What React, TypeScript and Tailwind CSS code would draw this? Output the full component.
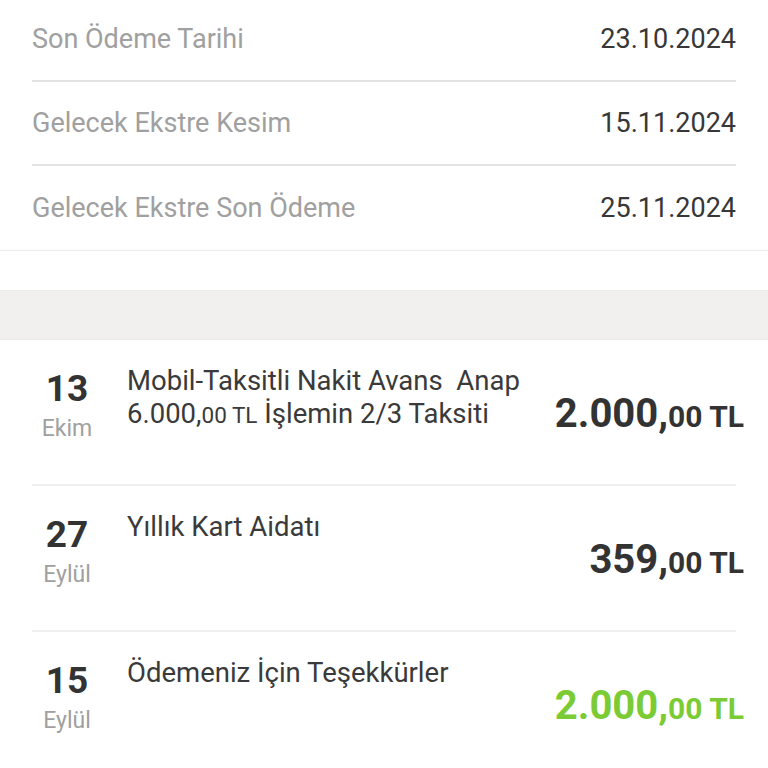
const infoRows = [
  { label: 'Son Ödeme Tarihi', value: '23.10.2024' },
  { label: 'Gelecek Ekstre Kesim', value: '15.11.2024' },
  { label: 'Gelecek Ekstre Son Ödeme', value: '25.11.2024' },
];

interface Transaction {
  day: string;
  month: string;
  title: string;
  detail?: boolean;
  whole: string;
  cents: string;
  positive?: boolean;
}

const transactions: Transaction[] = [
  {
    day: '13',
    month: 'Ekim',
    title: 'Mobil-Taksitli Nakit Avans\u00a0 Anap',
    detail: true,
    whole: '2.000,',
    cents: '00 TL',
  },
  { day: '27', month: 'Eylül', title: 'Yıllık Kart Aidatı', whole: '359,', cents: '00 TL' },
  {
    day: '15',
    month: 'Eylül',
    title: 'Ödemeniz İçin Teşekkürler',
    whole: '2.000,',
    cents: '00 TL',
    positive: true,
  },
];

export default function App() {
  return (
    <div className="w-[768px] h-[768px] overflow-hidden bg-white" style={{ fontFamily: 'Roboto, "Noto Sans", sans-serif' }}>
      <div className="-mt-[2px] border-b border-[#ececec]">
        {infoRows.map((row, i) => (
          <div key={row.label} className="px-8">
            <div
              className={
                'h-[84px] flex items-center justify-between text-[27px] ' +
                (i < infoRows.length - 1 ? 'border-b-2 border-[#e3e3e3]' : '')
              }
            >
              <span className="text-[#a0a0a0]">{row.label}</span>
              <span className="text-[#373737]">{row.value}</span>
            </div>
          </div>
        ))}
      </div>

      <div className="h-[39px]" />
      <div className="h-[50px] bg-[#f1f0ee] border-y border-[#ebebea]" />

      <div>
        {transactions.map((t, i) => (
          <div key={i}>
            {i > 0 && <div className="mx-8 h-[2px] bg-[#f0f0f0]" />}
            <div className="h-[144px] pl-8 pr-6 flex items-center">
              <div className="self-start pt-[26px] w-[70px] flex flex-col items-center">
                <span className="text-[37px] font-bold leading-[46px] text-[#333]">{t.day}</span>
                <span className="text-[23px] leading-[34px] text-[#a0a0a0]">{t.month}</span>
              </div>
              <div className="self-start pt-[24px] ml-[25px] flex-1 text-[27.5px] leading-[33px] text-[#3a3a3a]">
                <div>{t.title}</div>
                {t.detail && (
                  <div>
                    6.000,<span className="text-[22.5px]">00 TL</span> İşlemin 2/3 Taksiti
                  </div>
                )}
              </div>
              <div className={'font-bold whitespace-nowrap pt-[4px] ' + (t.positive ? 'text-[#7bcb35]' : 'text-[#333]')}>
                <span className="text-[40px]">{t.whole}</span>
                <span className="text-[30px]">{t.cents}</span>
              </div>
            </div>
          </div>
        ))}
      </div>
    </div>
  );
}
